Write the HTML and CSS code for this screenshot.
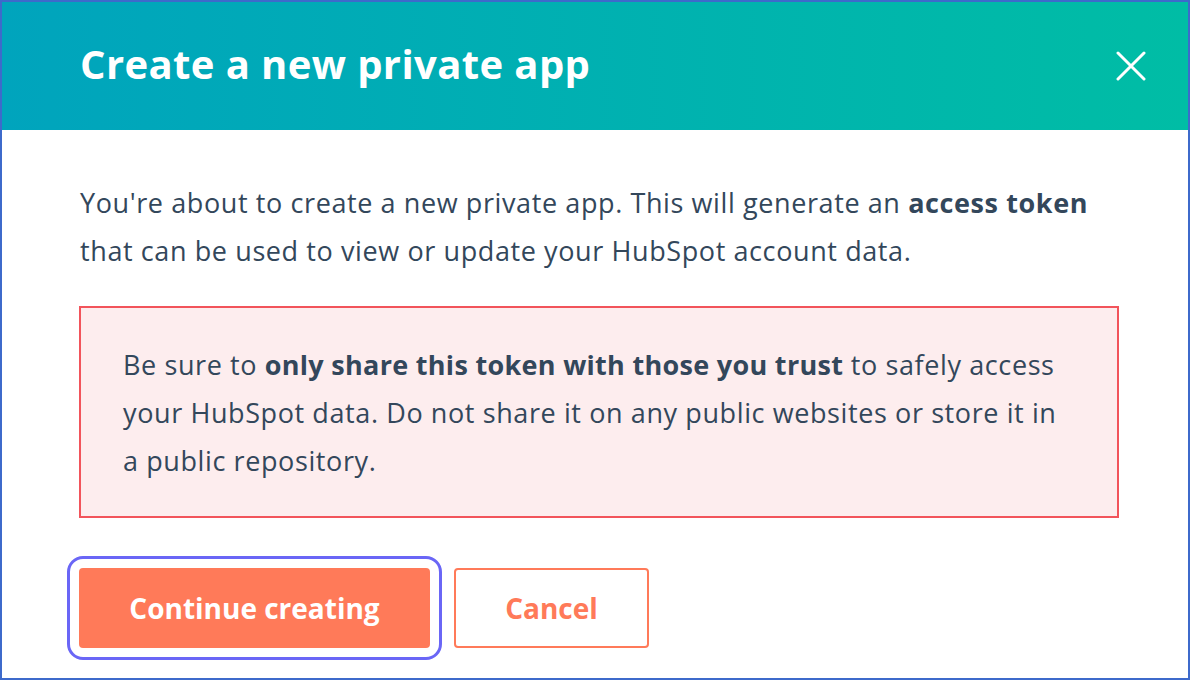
FILE: index.html
```html
<!DOCTYPE html>
<html>
<head>
<meta charset="utf-8">
<link rel="stylesheet" href="styles.css">
</head>
<body>
<div class="frame">
  <header class="header">
    <h1 class="title">Create a new private app</h1>
    <button class="close" aria-label="Close">
      <svg width="30" height="30" viewBox="0 0 30 30"><path d="M2 2 L28 28 M28 2 L2 28" stroke="#fff" stroke-width="3" stroke-linecap="round" fill="none"/></svg>
    </button>
  </header>
  <main class="content">
    <p class="intro">You're about to create a new private app. This will generate an <strong>access token</strong> that can be used to view or update your HubSpot account data.</p>
    <div class="alert">
      <p>Be sure to <strong>only share this token with those you trust</strong> to safely access your HubSpot data. Do not share it on any public websites or store it in a public repository.</p>
    </div>
    <div class="actions">
      <button class="btn btn-primary">Continue creating</button>
      <button class="btn btn-secondary">Cancel</button>
    </div>
  </main>
</div>
</body>
</html>
```
FILE: styles.css
```css
* { box-sizing: border-box; }
html, body { margin: 0; padding: 0; background: #fff; }
body { font-family: "Open Sans", "Noto Sans", sans-serif; color: #33475b; }
.frame {
  width: 1190px;
  height: 680px;
  border: 2px solid #3d6acb;
  overflow: hidden;
  display: flex;
  flex-direction: column;
}
.header {
  height: 128px;
  flex: none;
  background: linear-gradient(90deg, #00a4bd 0%, #00bda5 100%);
  display: flex;
  align-items: center;
  justify-content: space-between;
  padding: 0 42px 6px 78px;
}
.title {
  margin: 0;
  color: #fff;
  font-size: 40px;
  font-weight: 700;
  letter-spacing: 0.4px;
}
.close {
  background: none;
  border: 0;
  padding: 0;
  width: 30px;
  height: 30px;
  display: flex;
  margin-top: 6px;
}
.content {
  padding: 49px 69px 0 77px;
}
.intro {
  margin: 0 0 0 1px;
  font-size: 27px;
  line-height: 48px;
  letter-spacing: 0.6px;
}
.intro strong { font-weight: 700; }
.alert {
  margin-top: 31px;
  background: #fdedee;
  border: 2px solid #f2545b;
  padding: 33px 50px 31px 42px;
}
.alert p {
  margin: 0;
  font-size: 27px;
  line-height: 48px;
  letter-spacing: 0.6px;
}
.alert strong { font-weight: 700; letter-spacing: 0.3px; }
.actions {
  margin-top: 50px;
  display: flex;
  gap: 24px;
}
.btn {
  height: 80px;
  font-family: inherit;
  font-size: 28px;
  font-weight: 700;
  border-radius: 4px;
  cursor: pointer;
}
.btn-primary {
  width: 351px;
  background: #ff7a59;
  color: #fff;
  border: 0;
  outline: 3px solid #6a66f6;
  outline-offset: 9px;
}
.btn-secondary {
  width: 195px;
  background: #fff;
  color: #ff7a59;
  border: 2px solid #ff7a59;
}
```
